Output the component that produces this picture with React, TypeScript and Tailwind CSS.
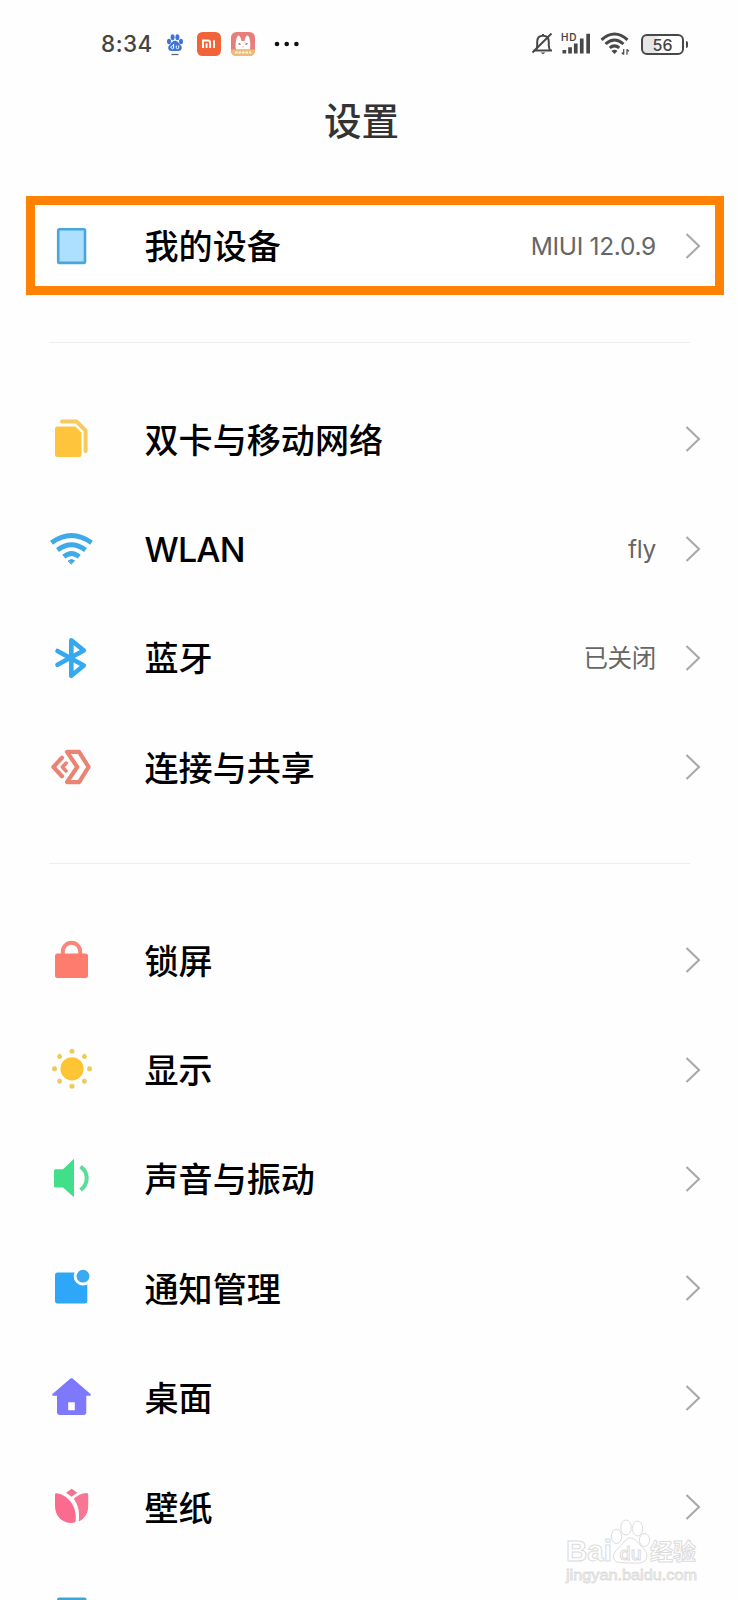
import type { ReactNode } from "react";

function Glyph({ children }: { children: ReactNode }) {
  return (
    <svg viewBox="-23 -23 46 46" className="size-[46px] shrink-0" fill="none" strokeLinecap="round" strokeLinejoin="round">
      {children}
    </svg>
  );
}

const DeviceIcon = () => (
  <Glyph>
    <rect x="-12.8" y="-16.7" width="26.8" height="33.6" rx="1.5" fill="#ade0ff" stroke="#4aa5da" strokeWidth="2.6" />
  </Glyph>
);

const SimIcon = () => (
  <Glyph>
    <path d="M-9-17.5H5.500L14.6-8.500V12" stroke="#f8c95c" strokeWidth="4" />
    <path d="M-13.5-12.5H4.5L10.5-6.5V15.5a2.5 2.5 0 0 1-2.5 2.5H-13.5a2.5 2.5 0 0 1-2.5-2.5V-10a2.5 2.5 0 0 1 2.5-2.5Z" fill="#fec53c" />
  </Glyph>
);

const WifiIcon = () => (
  <Glyph>
    <g stroke="#3faae6" strokeWidth="4.8" strokeLinecap="butt">
      <path d="M-19.5-6.3Q.5-20.6 20.5-6.3" />
      <path d="M-13.5 1Q.5-9.6 14.500 1" />
      <path d="M-7.200 7.600Q.5 1.200 8.200 7.600" />
    </g>
    <path d="M-2.600 11.800Q.5 9 3.600 11.800L.5 14.800Z" fill="#3faae6" stroke="#3faae6" />
  </Glyph>
);

const BluetoothIcon = () => (
  <Glyph>
    <path d="M-13.5-7L12.8 7.5L.3 17.7V-17.7L12.8-7.5L-13.5 6.8" stroke="#35a9ef" strokeWidth="4.6" />
  </Glyph>
);

const ShareIcon = () => (
  <Glyph>
    <g stroke="#e98474" strokeWidth="4.2">
      <path d="M-4-15.1H8.1L17.600 0L8.100 15.100H-4L6.300 0Z" />
      <path d="M-9-9.3L-17.600 0L-9 9.300" />
      <path d="M-4.800-4L-8.600 0L-5 4" strokeWidth="3.500" />
    </g>
  </Glyph>
);

const LockIcon = () => (
  <Glyph>
    <path d="M-8.2-4V-8.500a8.700 8.700 0 0 1 17.400 0V-4" stroke="#f5877b" strokeWidth="4" />
    <rect x="-16" y="-6.500" width="33" height="24.500" rx="2.500" fill="#fd7c6d" />
  </Glyph>
);

const SunIcon = () => (
  <Glyph>
    <circle cx="1" cy="-1.2" r="11.6" fill="#fdc433" />
    {[0, 45, 90, 135, 180, 225, 270, 315].map((a) => (
      <circle key={a} cx="17.5" cy="0" r="2.5" fill="#eccb5e" transform={`translate(1 -1.2) rotate(${a})`} />
    ))}
  </Glyph>
);

const SoundIcon = () => (
  <Glyph>
    <path d="M-15.5-9.8H-8L3-20.3V18.3L-8 8.5H-15.5a1.5 1.5 0 0 1-1.5-1.5V-8.3a1.5 1.5 0 0 1 1.5-1.5Z" fill="#41df89" />
    <path d="M9.5-12.3C17.8-6.5 17.8 5 9.5 11" stroke="#5ddc96" strokeWidth="4" strokeLinecap="butt" />
  </Glyph>
);

const NoticeIcon = () => (
  <Glyph>
    <rect x="-16" y="-15.5" width="32.3" height="31" rx="2.5" fill="#2fa7f8" />
    <circle cx="12" cy="-11.8" r="9.3" fill="#fefefe" />
    <circle cx="12" cy="-11.8" r="6.4" fill="#3aa9f2" />
  </Glyph>
);

const HomeIcon = () => (
  <Glyph>
    <path
      fillRule="evenodd"
      d="M-.6-19.4Q.5-20.3 1.6-19.4L19.5-4Q20.8-2.4 18.5-2.2H15.3V14a3 3 0 0 1-3 3H-11a3 3 0 0 1-3-3V-2.2H-17.5Q-19.8-2.4-18.5-4ZM-2.8 4.2V12.2H3.8V4.2Z"
      fill="#7e79fa"
    />
  </Glyph>
);

const TulipIcon = () => (
  <Glyph>
    <path d="M-5-14.2L.7-18.2L6.4-14.2L.5-10.2Z" fill="#ee7692" />
    <path d="M-16-12.4Q-16-14-14.3-13.8C-3-12 6.5-1 4.6 14.8Q3.5 16.2-.5 15.9C-10 15.5-16 8-16-1Z" fill="#fb6b8d" />
    <path d="M2.8-8.2Q8-13.3 15.5-14Q17.2-14 17.2-12.4V-1C17.2 6 14 11.5 7.8 14.4C8.8 6 7.5-2 2.8-8.2Z" fill="#f87593" />
  </Glyph>
);

const BottomIcon = () => (
  <Glyph>
    <rect x="-14" y="-19.5" width="29.5" height="36" rx="2" fill="#3fa6d6" />
  </Glyph>
);

function Chevron() {
  return (
    <svg viewBox="0 0 16 28" className="h-7 w-4 shrink-0" fill="none" stroke="#a9a9a9" strokeWidth="2.1">
      <path d="M1.5 2L14 14L1.5 26" />
    </svg>
  );
}

type RowProps = { icon: ReactNode; label: string; value?: string; className?: string; labelClass?: string };

function Row({ icon, label, value, className = "h-[109.4px]", labelClass = "pt-[3px]" }: RowProps) {
  return (
    <div className={`flex shrink-0 items-center pr-[37px] pl-12 ${className}`}>
      {icon}
      <span className={`ml-[50.5px] flex-1 text-[34.1px] leading-none font-medium text-black ${labelClass}`}>{label}</span>
      {value && <span className="mr-[29px] pt-px text-[24.5px] leading-none tracking-[-0.3px] text-[#666]">{value}</span>}
      <Chevron />
    </div>
  );
}

function Divider() {
  return <div className="mr-12 ml-[49px] h-px shrink-0 bg-[#efecee]" />;
}

function StatusBar() {
  return (
    <div className="flex h-[88px] shrink-0 items-center pr-[50px] pl-[101px] text-[#444]">
      <span className="w-[51px] pt-px text-[22.5px] leading-none font-medium tracking-[0.5px]">8:34</span>
      <svg viewBox="0 0 18 24" className="ml-[14px] h-6 w-[18px]" fill="#3f73d8">
        <ellipse cx="3" cy="9.5" rx="2" ry="2.8" />
        <ellipse cx="6.6" cy="5.2" rx="2" ry="3" />
        <ellipse cx="11.4" cy="5.2" rx="2" ry="3" />
        <ellipse cx="15" cy="9.5" rx="2" ry="2.8" />
        <path d="M9 8.7c3 0 3.5 2.5 5.5 4.2 2.5 2.3 1.2 6-2 6H5.5c-3.2 0-4.5-3.7-2-6C5.5 11.2 6 8.7 9 8.7Z" />
        <path d="M7.6 12v4.5M7.6 14.5a1.4 1.4 0 1 0 0 1.5M10.3 13.5v2a1.2 1.2 0 0 0 2.4 0v-2" fill="none" stroke="#fff" strokeWidth="1" />
        <path d="M5.5 22.5h7" stroke="#666" strokeWidth="1.3" />
      </svg>
      <svg viewBox="0 0 24 24" className="ml-[13px] size-6">
        <rect width="24" height="24" rx="5.5" fill="#f1643a" />
        <path d="M6 16V8.5h4.800q2.300 0 2.300 2.300V16M9.600 11.200V16M17 8.300V16" fill="none" stroke="#fff" strokeWidth="1.9" />
      </svg>
      <svg viewBox="0 0 24 24" className="ml-[10px] size-6">
        <rect width="24" height="24" rx="5.5" fill="#e67f7c" />
        <path d="M5 17.5C4 12 5.2 4.5 7.3 3.5C9 3.3 10 6.5 10.5 9h3c.5-2.5 1.5-5.7 3.2-5.5C18.8 4.5 20 12 19 17.5Z" fill="#fff" />
        <path d="M7.5 11.5l2 1M16.5 11.5l-2 1" stroke="#8e5656" strokeWidth="1.3" />
        <path d="M11 14.5h2l-1 1Z" fill="#e67f7c" />
        <path d="M0 17.5h24q0 6.5-5.5 6.5h-13Q0 24 0 17.5Z" fill="#edbd78" />
        <path d="M4 20.5h16" stroke="#fff3d8" strokeWidth="2" strokeDasharray="2.5 1" />
      </svg>
      <svg viewBox="0 0 26 6" className="ml-[19px] h-[6px] w-[26px]" fill="#111">
        <circle cx="3" cy="3" r="2.3" />
        <circle cx="12.7" cy="3" r="2.3" />
        <circle cx="22.4" cy="3" r="2.3" />
      </svg>
      <div className="flex-1" />
      <svg viewBox="0 0 24 24" className="h-6 w-6" fill="none" stroke="#484848" strokeWidth="2">
        <path d="M2.500 18.5H21M5 18q1.200-1.700 1.200-4.500V10c0-3.700 2.200-6.200 5.800-6.200s5.800 2.500 5.800 6.200v3.500q0 2.800 1.200 4.500M12 3.800V2" />
        <path d="M9.500 20.500h5L12 22.300Z" fill="#484848" stroke="none" />
        <path d="M1.500 20.500L20.500 1.500" />
      </svg>
      <svg viewBox="0 0 30 24" className="ml-[6px] h-6 w-[30px]" fill="#484848">
        <text x="0" y="8.5" fontSize="10" fontWeight="600" fontFamily="Inter, sans-serif" textLength="15.5">HD</text>
        <path d="M1.5 18h3.700V21.500H1.500ZM7.200 15.200h3.700v6.300H7.200ZM12.900 11.500h3.700v10h-3.700ZM18.900 6.500h3.700v15h-3.700ZM25.300 1.800h3.700v19.700h-3.700Z" />
      </svg>
      <svg viewBox="0 0 30 24" className="ml-[9px] h-6 w-[30px]" fill="none" stroke="#484848" strokeWidth="3">
        <path d="M1.500 7.800Q14.500-3.800 27.500 7.800M5.500 12Q14.500 4 23.500 12M9.700 15.900Q14.500 11.900 19.300 15.900" />
        <path d="M11.500 19Q14.500 16.300 17.500 19L14.500 22Z" fill="#484848" stroke="none" />
        <path d="M23.700 17v5.500M21.800 20.500l1.900 2M27 22.800v-5.500M27 17.300l1.900 2" strokeWidth="1.2" />
      </svg>
      <div className="ml-[11px] flex h-[21px] w-[43px] items-center justify-center rounded-[6px] border-[2.5px] border-[#484848] bg-linear-to-r from-[#e6e6e6] from-30% to-white to-45% pt-[2px] text-[16px] leading-none font-medium">
        56
      </div>
      <div className="ml-[2px] h-[7px] w-[2px] rounded-r bg-[#484848]" />
    </div>
  );
}

function Watermark() {
  return (
    <svg
      viewBox="0 0 140 70"
      className="absolute top-[1516px] left-[562px] h-[70px] w-[140px]"
      fill="#fff"
      stroke="#dcdcdc"
      strokeWidth="1"
      fontWeight="700"
    >
      <text x="4" y="45" fontSize="29" fontFamily="Liberation Sans, sans-serif" textLength="46" lengthAdjust="spacingAndGlyphs">Bai</text>
      <ellipse cx="54.5" cy="20.5" rx="5.2" ry="7" />
      <ellipse cx="64" cy="11.5" rx="5.2" ry="7.5" />
      <ellipse cx="75.5" cy="12.500" rx="5.2" ry="7.5" />
      <ellipse cx="82.5" cy="24" rx="5.2" ry="6.5" />
      <path d="M68 22c5 0 7 4 11 8s7 7 5.5 12-7 5.5-16 5-15 .5-16.500-4 1-8 5.500-12 6-9 10.500-9Z" />
      <text x="57.5" y="43.5" fontSize="18" fontWeight="500" fontFamily="Inter, sans-serif" textLength="22" lengthAdjust="spacingAndGlyphs">du</text>
      <text x="88" y="43.5" fontSize="23" fontFamily="Noto Sans CJK SC, sans-serif" textLength="46" lengthAdjust="spacingAndGlyphs">经验</text>
      <text x="4" y="64" fontSize="14" fontWeight="400" strokeWidth=".8" fontFamily="Liberation Sans, sans-serif" textLength="131" lengthAdjust="spacingAndGlyphs">jingyan.baidu.com</text>
    </svg>
  );
}

export default function App() {
  return (
    <main className="relative flex h-[1600px] w-[738px] flex-col overflow-hidden bg-[#fefefe] font-['Inter','Noto_Sans_CJK_SC',sans-serif]">
      <StatusBar />
      <h1 className="flex h-[68px] shrink-0 items-center justify-center pr-[15px] text-[37.5px] leading-none font-medium text-[#333]">设置</h1>
      <section className="mt-10 mr-[14px] ml-[26px] h-[99px] shrink-0 border-[9px] border-[#ff8205] bg-white">
        <Row icon={<DeviceIcon />} label="我的设备" value="MIUI 12.0.9" className="-mr-[23px] -ml-[35px] h-full" labelClass="pt-[4px]" />
      </section>
      <div className="h-[47px] shrink-0" />
      <Divider />
      <section className="flex shrink-0 flex-col pt-[41.5px] pb-[40.5px]">
        <Row icon={<SimIcon />} label="双卡与移动网络" />
        <Row icon={<WifiIcon />} label="WLAN" value="fly" labelClass="pt-[2px] tracking-[-0.8px]" />
        <Row icon={<BluetoothIcon />} label="蓝牙" value="已关闭" />
        <Row icon={<ShareIcon />} label="连接与共享" />
      </section>
      <Divider />
      <section className="flex shrink-0 flex-col pt-[42px]">
        <Row icon={<LockIcon />} label="锁屏" />
        <Row icon={<SunIcon />} label="显示" />
        <Row icon={<SoundIcon />} label="声音与振动" />
        <Row icon={<NoticeIcon />} label="通知管理" />
        <Row icon={<HomeIcon />} label="桌面" />
        <Row icon={<TulipIcon />} label="壁纸" />
        <Row icon={<BottomIcon />} label="" />
      </section>
      <Watermark />
    </main>
  );
}
